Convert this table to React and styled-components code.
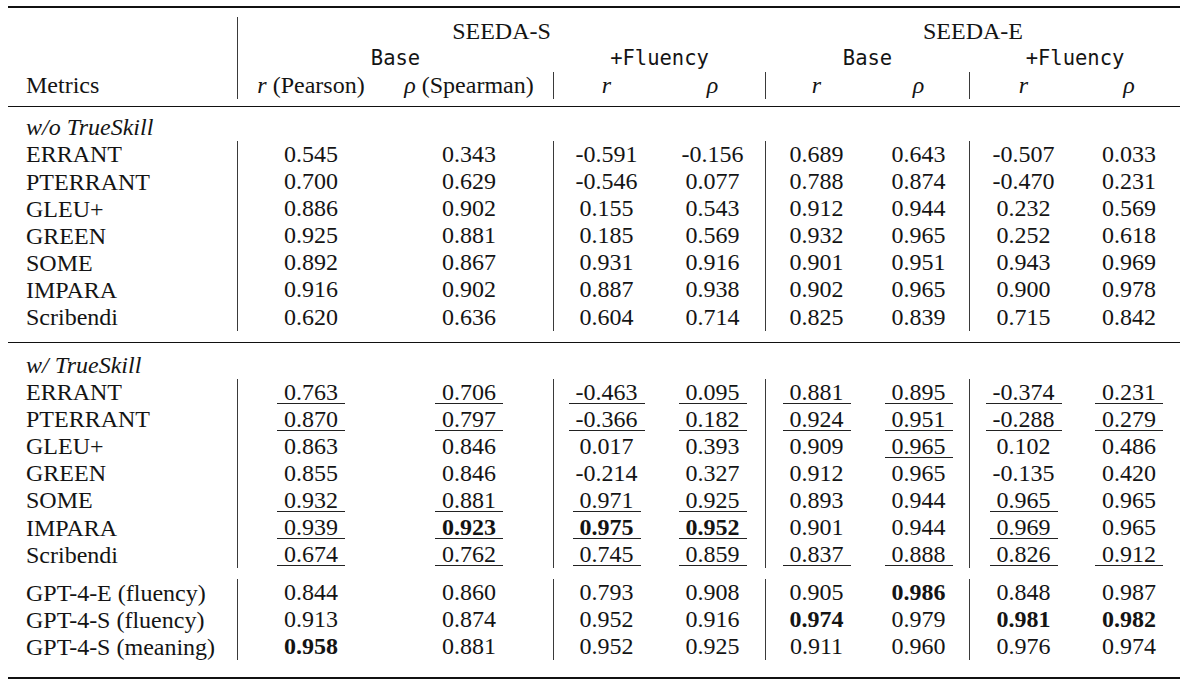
import React from 'react';
import styled, { createGlobalStyle } from 'styled-components';

const GlobalStyle = createGlobalStyle`
  html, body {
    margin: 0;
    padding: 0;
    background: #ffffff;
  }
  body {
    font-family: "Liberation Serif", Tinos, "Times New Roman", Times, serif;
    color: #141414;
  }
`;

const COLS = '229px 147px 169px 106px 106px 102px 102px 108px 103px';

const Page = styled.div`
  padding: 6px 0 0 8px;
`;

const Table = styled.div`
  width: 1172px;
  font-family: "Liberation Serif", Tinos, "Times New Roman", Times, serif;
  font-size: 24px;
  line-height: 1;
  color: #141414;
`;

const Rule = styled.div`
  border-top: ${(p) => p.$w || 1}px solid #111;
`;

const Block = styled.div`
  padding-top: ${(p) => p.$top}px;
  padding-bottom: ${(p) => p.$bottom}px;
`;

const Row = styled.div`
  display: grid;
  grid-template-columns: ${COLS};
  height: ${(p) => p.$h || 27.1}px;
`;

const Cell = styled.div`
  grid-column: span ${(p) => p.$span || 1};
  display: flex;
  align-items: center;
  justify-content: ${(p) => (p.$left ? 'flex-start' : 'center')};
  padding-left: ${(p) => (p.$left ? '17px' : '0')};
  border-left: 1px solid ${(p) => (p.$vline ? '#3a3a3a' : 'transparent')};
  white-space: nowrap;
`;

const Mono = styled.span`
  font-family: "DejaVu Sans Mono", "Liberation Mono", monospace;
  font-size: 20.5px;
`;

const Var = styled.i`
  font-family: "Liberation Serif", Tinos, "Times New Roman", serif;
  font-style: italic;
  margin-right: ${(p) => (p.$gap ? '6px' : '0')};
`;

const Section = styled.span`
  font-style: italic;
`;

const Value = styled.span`
  display: inline-block;
  padding: 0 7px;
  line-height: 22px;
  font-weight: ${(p) => (p.$bold ? 700 : 400)};
  border-bottom: 1px solid ${(p) => (p.$under ? '#222' : 'transparent')};
`;

// values are space separated, flags after a colon: u = underline, b = bold
const withoutTS = [
  ['ERRANT', '0.545 0.343 -0.591 -0.156 0.689 0.643 -0.507 0.033'],
  ['PTERRANT', '0.700 0.629 -0.546 0.077 0.788 0.874 -0.470 0.231'],
  ['GLEU+', '0.886 0.902 0.155 0.543 0.912 0.944 0.232 0.569'],
  ['GREEN', '0.925 0.881 0.185 0.569 0.932 0.965 0.252 0.618'],
  ['SOME', '0.892 0.867 0.931 0.916 0.901 0.951 0.943 0.969'],
  ['IMPARA', '0.916 0.902 0.887 0.938 0.902 0.965 0.900 0.978'],
  ['Scribendi', '0.620 0.636 0.604 0.714 0.825 0.839 0.715 0.842'],
];

const withTS = [
  ['ERRANT', '0.763:u 0.706:u -0.463:u 0.095:u 0.881:u 0.895:u -0.374:u 0.231:u'],
  ['PTERRANT', '0.870:u 0.797:u -0.366:u 0.182:u 0.924:u 0.951:u -0.288:u 0.279:u'],
  ['GLEU+', '0.863 0.846 0.017 0.393 0.909 0.965:u 0.102 0.486'],
  ['GREEN', '0.855 0.846 -0.214 0.327 0.912 0.965 -0.135 0.420'],
  ['SOME', '0.932:u 0.881:u 0.971:u 0.925:u 0.893 0.944 0.965:u 0.965'],
  ['IMPARA', '0.939:u 0.923:ub 0.975:ub 0.952:ub 0.901 0.944 0.969:u 0.965'],
  ['Scribendi', '0.674:u 0.762:u 0.745:u 0.859:u 0.837:u 0.888:u 0.826:u 0.912:u'],
];

const gpt = [
  ['GPT-4-E (fluency)', '0.844 0.860 0.793 0.908 0.905 0.986:b 0.848 0.987'],
  ['GPT-4-S (fluency)', '0.913 0.874 0.952 0.916 0.974:b 0.979 0.981:b 0.982:b'],
  ['GPT-4-S (meaning)', '0.958:b 0.881 0.952 0.925 0.911 0.960 0.976 0.974'],
];

const lineAt = [0, 2, 4, 6];

const DataRow = ({ name, values }) => (
  <Row>
    <Cell $left>{name}</Cell>
    {values.split(' ').map((v, i) => {
      const [text, flags = ''] = v.split(':');
      return (
        <Cell key={i} $vline={lineAt.includes(i)}>
          <Value $under={flags.includes('u')} $bold={flags.includes('b')}>
            {text}
          </Value>
        </Cell>
      );
    })}
  </Row>
);

const App = () => (
  <Page>
    <GlobalStyle />
    <Table>
      <Rule $w={2} />
      <Block $top={9} $bottom={7}>
        <Row $h={27.3}>
          <Cell />
          <Cell $span={4} $vline>SEEDA-S</Cell>
          <Cell $span={4}>SEEDA-E</Cell>
        </Row>
        <Row $h={27.3}>
          <Cell />
          <Cell $span={2} $vline><Mono>Base</Mono></Cell>
          <Cell $span={2}><Mono>+Fluency</Mono></Cell>
          <Cell $span={2}><Mono>Base</Mono></Cell>
          <Cell $span={2}><Mono>+Fluency</Mono></Cell>
        </Row>
        <Row $h={27.3}>
          <Cell $left>Metrics</Cell>
          <Cell $vline><Var $gap>r</Var>(Pearson)</Cell>
          <Cell><Var $gap>ρ</Var>(Spearman)</Cell>
          <Cell $vline><Var>r</Var></Cell>
          <Cell><Var>ρ</Var></Cell>
          <Cell $vline><Var>r</Var></Cell>
          <Cell><Var>ρ</Var></Cell>
          <Cell $vline><Var>r</Var></Cell>
          <Cell><Var>ρ</Var></Cell>
        </Row>
      </Block>
      <Rule />
      <Block $top={6} $bottom={11}>
        <Row $h={28}>
          <Cell $left $span={9}><Section>w/o TrueSkill</Section></Cell>
        </Row>
        {withoutTS.map(([name, values]) => (
          <DataRow key={name} name={name} values={values} />
        ))}
      </Block>
      <Rule />
      <Block $top={8} $bottom={11}>
        <Row $h={28}>
          <Cell $left $span={9}><Section>w/ TrueSkill</Section></Cell>
        </Row>
        {withTS.map(([name, values]) => (
          <DataRow key={name} name={name} values={values} />
        ))}
      </Block>
      <Block $top={0} $bottom={17}>
        {gpt.map(([name, values]) => (
          <DataRow key={name} name={name} values={values} />
        ))}
      </Block>
      <Rule $w={2} />
    </Table>
  </Page>
);

export default App;
